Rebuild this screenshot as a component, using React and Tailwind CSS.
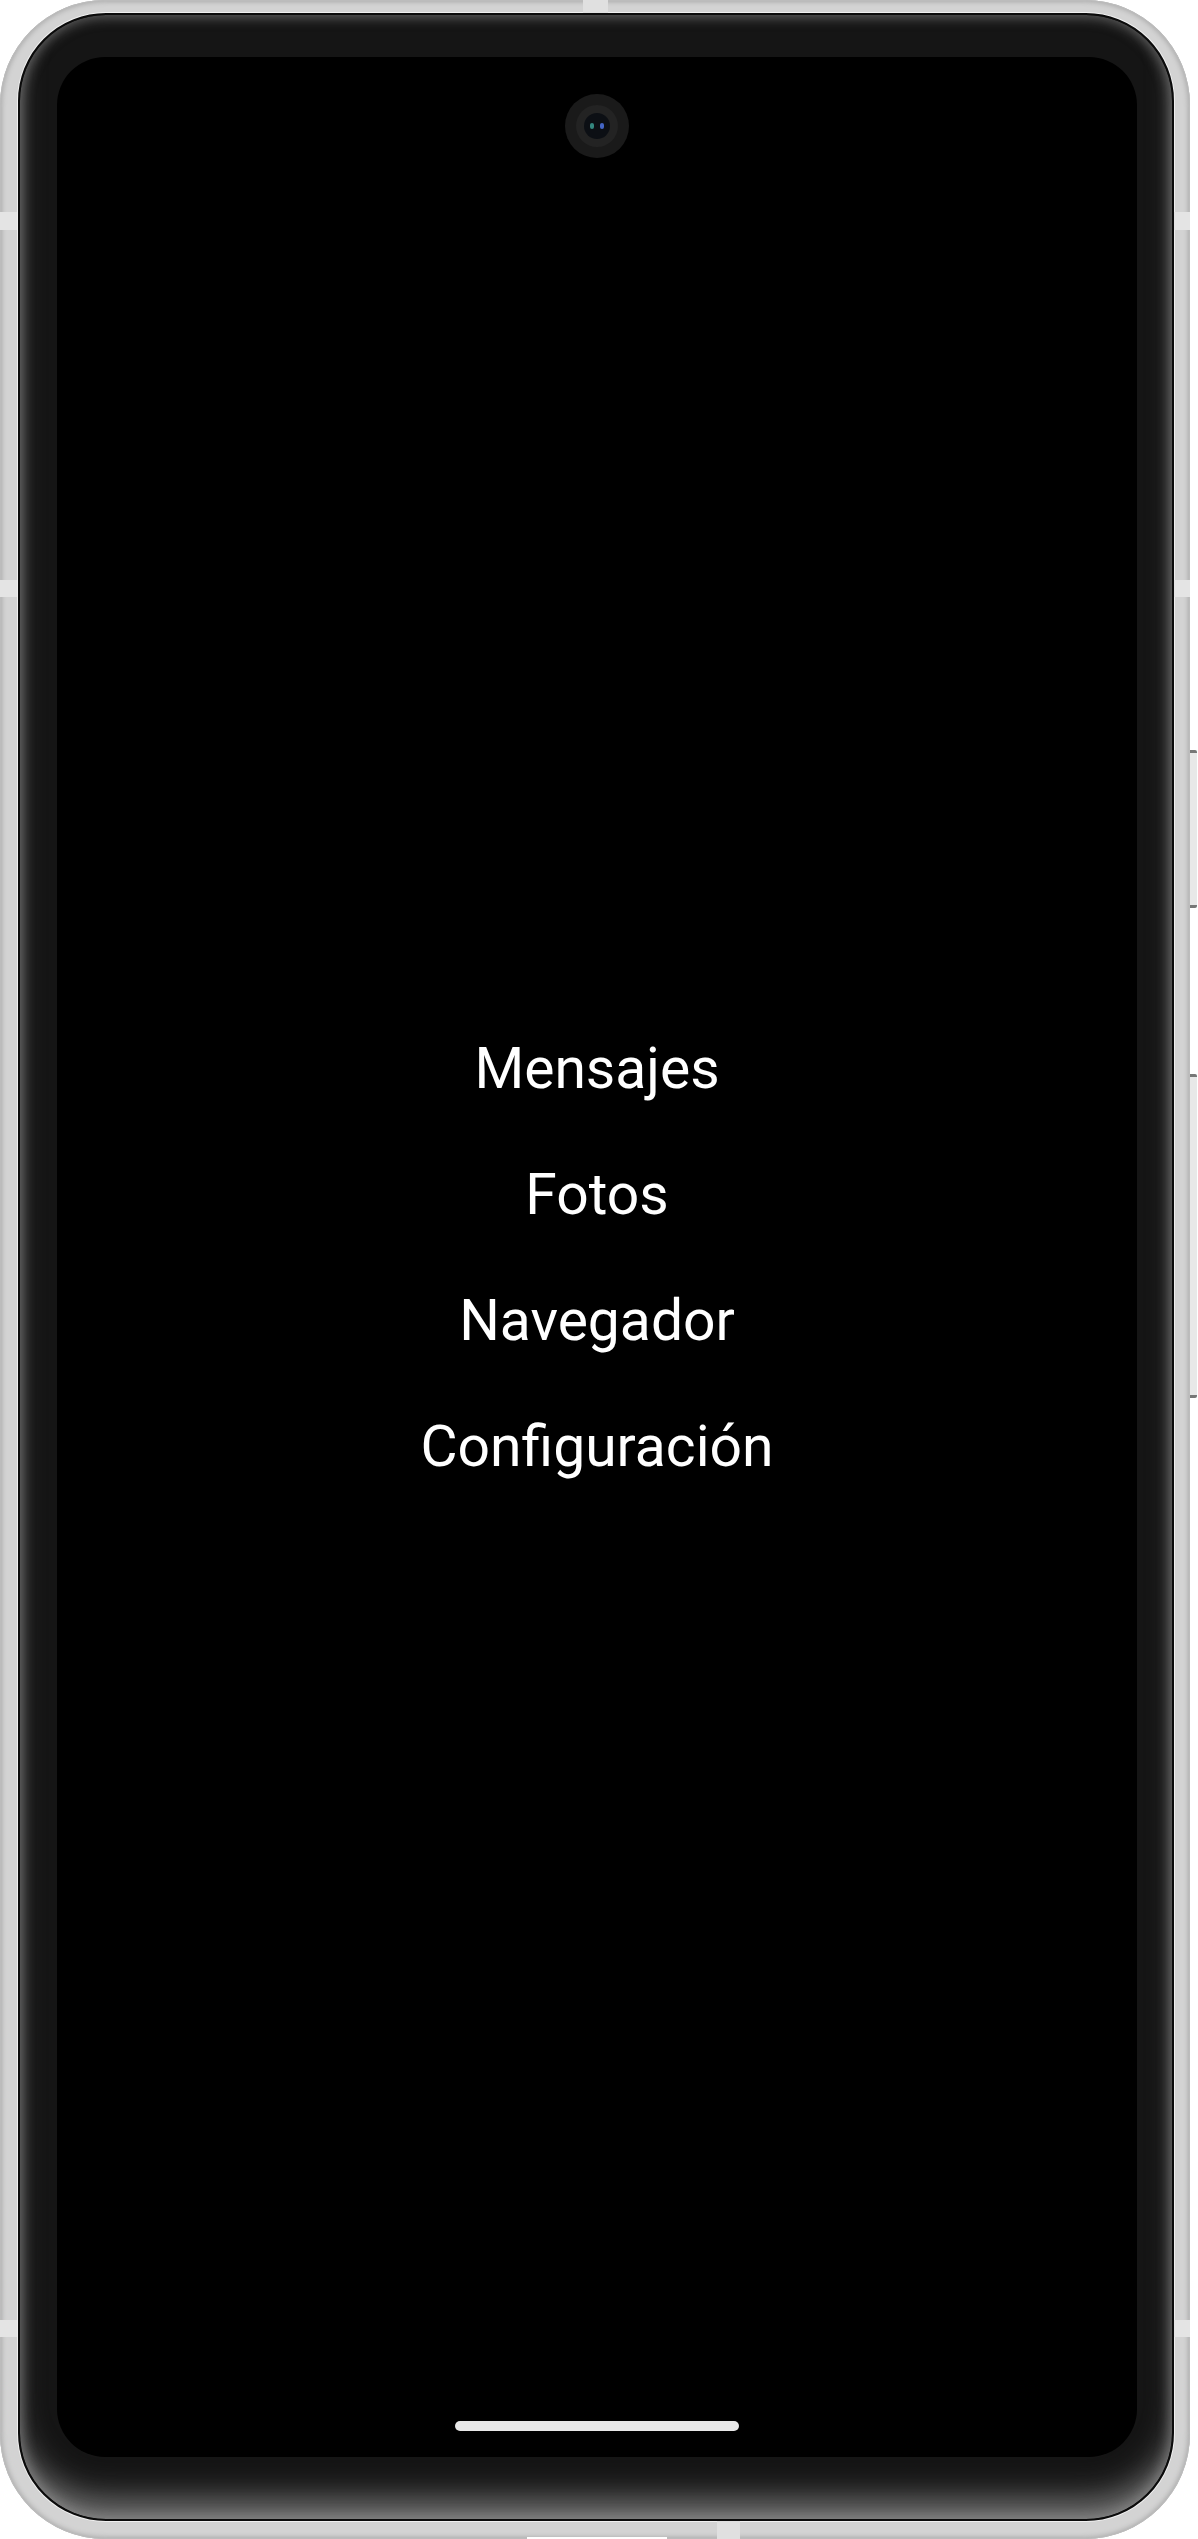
const apps = ["Mensajes", "Fotos", "Navegador", "Configuración"];

function Camera() {
  return (
    <div className="absolute top-[37px] left-1/2 -translate-x-1/2 w-[64px] h-[64px] rounded-full bg-[#1a1a1a] flex items-center justify-center">
      <div className="w-[42px] h-[42px] rounded-full bg-[#232323] flex items-center justify-center">
        <div className="w-[26px] h-[26px] rounded-full bg-[#0c0f14] flex items-center justify-center gap-[6px]">
          <div className="w-[4px] h-[6px] rounded-full bg-[#3fa59a]/80" />
          <div className="w-[4px] h-[6px] rounded-full bg-[#4a6fd8]/90" />
        </div>
      </div>
    </div>
  );
}

export default function App() {
  return (
    <div className="w-[1198px] h-[2539px] bg-white flex overflow-hidden" style={{ fontFamily: "Roboto, 'Liberation Sans', sans-serif" }}>
      {/* Phone body */}
      <div className="relative w-[1190px] h-[2539px] rounded-[105px] bg-[#d3d3d3] shadow-[inset_0_0_0_1px_#bcbcbc,inset_0_0_5px_2px_#ababab] pl-[18px] pt-[13px] pr-[16px] pb-[18px] flex">
        {/* antenna bands */}
        <div className="absolute left-0 top-[212px] w-[17px] h-[18px] bg-[#e4e4e4]" />
        <div className="absolute left-0 top-[580px] w-[17px] h-[17px] bg-[#e4e4e4]" />
        <div className="absolute left-0 top-[2320px] w-[17px] h-[17px] bg-[#e4e4e4]" />
        <div className="absolute right-0 top-[212px] w-[16px] h-[18px] bg-[#e4e4e4]" />
        <div className="absolute right-0 top-[580px] w-[16px] h-[17px] bg-[#e4e4e4]" />
        <div className="absolute right-0 top-[2320px] w-[16px] h-[17px] bg-[#e4e4e4]" />
        <div className="absolute top-0 left-[583px] w-[25px] h-[13px] bg-[#e0e0e0]" />
        <div className="absolute bottom-0 left-[717px] w-[23px] h-[18px] bg-[#e0e0e0]" />
        <div className="absolute bottom-0 left-[527px] w-[140px] h-[2px] bg-white" />

        {/* Glass / bezel */}
        <div className="flex-1 rounded-[88px] border-[2px] border-[#0b0b0b] bg-[#151515] shadow-[0_0_0_1px_#f0f0f0,inset_0_0_12px_3px_rgba(150,150,150,0.55),inset_0_-30px_32px_-10px_rgba(150,150,150,0.75)] pl-[37px] pt-[42px] pr-[34px] pb-[62px] flex">
          {/* Screen */}
          <div className="relative w-[1080px] h-[2400px] rounded-[48px] bg-black flex flex-col items-center justify-center">
            <Camera />
            {apps.map((name) => (
              <div key={name} className="h-[126px] flex items-center text-white text-[57px] leading-none">
                {name}
              </div>
            ))}
            <div className="absolute bottom-[26px] left-1/2 -translate-x-1/2 w-[284px] h-[10px] rounded-full bg-[#e8e8e8]" />
          </div>
        </div>
      </div>

      {/* Side buttons */}
      <div className="w-[8px] flex flex-col">
        <div className="h-[750px]" />
        <div className="h-[158px] w-[7px] bg-[#e8e8e8] border-y-[3px] border-[#777] rounded-r-[2px]" />
        <div className="h-[166px]" />
        <div className="h-[324px] w-[7px] bg-[#e8e8e8] border-y-[3px] border-[#777] rounded-r-[2px]" />
      </div>
    </div>
  );
}
